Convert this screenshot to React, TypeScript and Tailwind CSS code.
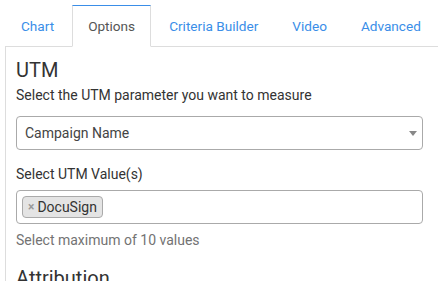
import React from 'react';

const tabs = ['Chart', 'Options', 'Criteria Builder', 'Video', 'Advanced'];

export default function App() {
  const active = 'Options';

  return (
    <div className="w-[438px] h-[281px] overflow-hidden bg-white font-['Roboto',_sans-serif] text-[14px] text-[#333]">
      <div className="ml-[5px] pt-[5px]">
        {/* Tabs */}
        <ul className="flex border-b border-[#ddd]">
          {tabs.map((tab) => (
            <li key={tab} className="-mb-px mr-[2px]">
              <a
                className={`block px-[15px] py-[10px] text-[13.6px] leading-[20px] border whitespace-nowrap ${
                  tab === active
                    ? 'bg-white border-[#ddd] border-t-[#3a8ee8] border-b-white text-[#555]'
                    : 'border-transparent text-[#3a8ee8]'
                }`}
              >
                {tab}
              </a>
            </li>
          ))}
        </ul>

        {/* Panel */}
        <div className="border-l border-[#ddd] pl-[10px] pr-[15px] pt-[12px]">
          <h3 className="text-[20px] leading-[22px] text-[#333]">UTM</h3>

          <label className="block mt-[4px] leading-[20px]">
            Select the UTM parameter you want to measure
          </label>
          <div className="mt-[11px] h-[34px] flex items-center justify-between border border-[#aaa] rounded-[4px] pl-[8px] pr-[5px]">
            <span className="leading-[20px] text-[#444]">Campaign Name</span>
            <span className="w-0 h-0 border-x-[4px] border-x-transparent border-t-[5px] border-t-[#888]" />
          </div>

          <label className="block mt-[14px] leading-[20px]">Select UTM Value(s)</label>
          <div className="mt-[6px] h-[34px] flex items-center border border-[#aaa] rounded-[4px] px-[5px]">
            <span className="flex items-center h-[22px] px-[5px] bg-[#e4e4e4] border border-[#aaa] rounded-[4px] leading-[20px] text-[#333]">
              <span className="text-[#999] font-bold text-[12px] mr-[3px]">×</span>
              DocuSign
            </span>
          </div>
          <p className="mt-[6px] leading-[20px] text-[#737373]">Select maximum of 10 values</p>

          <h3 className="mt-[17px] text-[20px] leading-[22px] text-[#333]">Attribution</h3>
        </div>
      </div>
    </div>
  );
}
